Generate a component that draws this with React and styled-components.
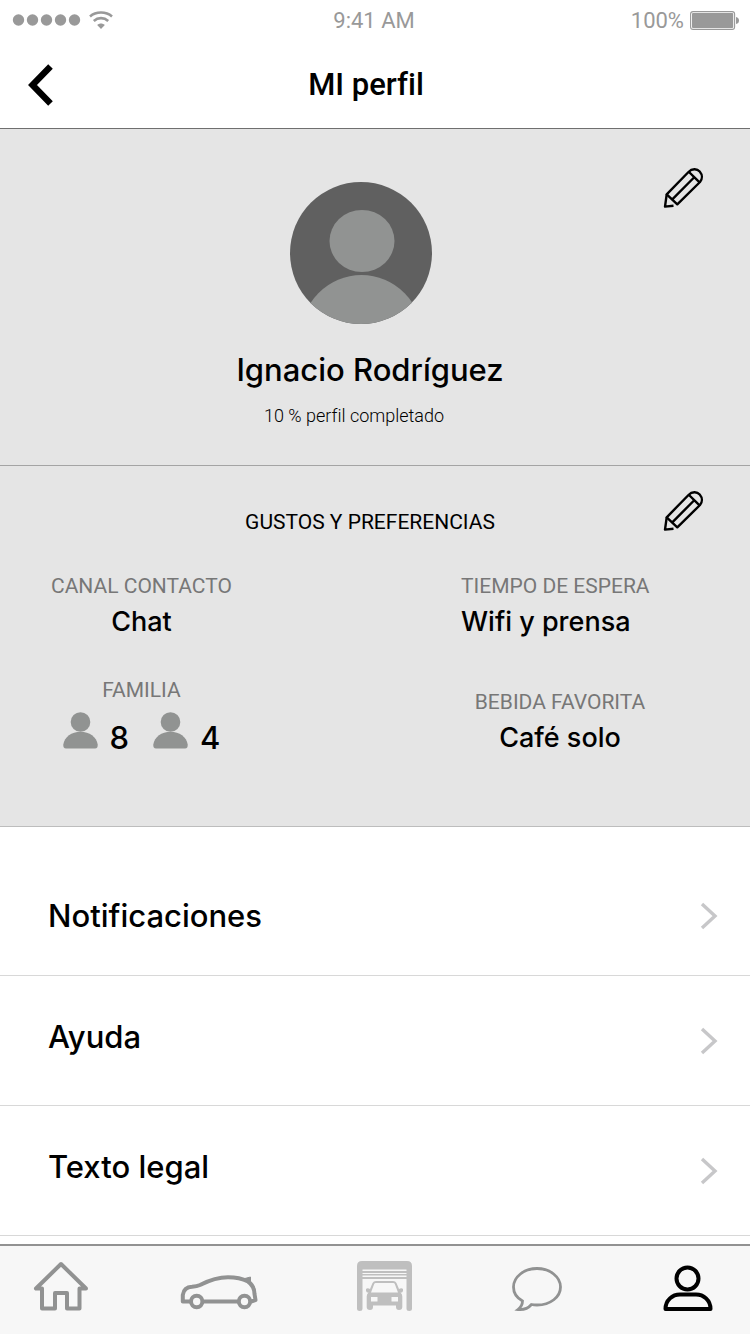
import React from "react";
import styled, { createGlobalStyle } from "styled-components";

const wide = `Inter, "Liberation Sans", sans-serif`;
const narrow = `Roboto, "Liberation Sans", sans-serif`;

const GlobalStyle = createGlobalStyle`
  *, *::before, *::after { box-sizing: border-box; }
  body {
    margin: 0;
    background: #fff;
    color: #000;
    font-family: ${wide};
    font-variant-ligatures: none;
  }
  h1, h2, p, dl, dd, ul { margin: 0; padding: 0; }
  button { border: 0; padding: 0; background: none; color: inherit; cursor: pointer; }
  svg { display: block; }
`;

const Screen = styled.div`
  display: flex;
  flex-direction: column;
  min-height: 100vh;
`;

const StatusBar = styled.div`
  display: grid;
  grid-template-columns: 1fr auto 1fr;
  align-items: center;
  height: 40px;
  padding: 0 10px 0 8px;
  color: #999;

  span {
    padding-top: 2px;
    font-family: ${narrow};
    font-size: 22px;
    line-height: 24px;
  }
`;

const Signal = styled.div`
  display: flex;
  align-items: center;
  gap: 8px;
  padding-left: 4px;
`;

const Power = styled.div`
  display: flex;
  align-items: center;
  justify-content: flex-end;
  gap: 6px;
`;

const Header = styled.header`
  display: grid;
  align-items: center;
  height: 89px;
  padding: 2px 18px 0 0;
  border-bottom: 1px solid #6f6f6f;
`;

const BackButton = styled.button`
  grid-area: 1 / 1;
  justify-self: start;
  z-index: 1;
  margin-left: 24px;
`;

const Title = styled.h1`
  grid-area: 1 / 1;
  text-align: center;
  font-family: ${narrow};
  font-size: 31px;
  font-weight: 500;
  line-height: 40px;
`;

const Panel = styled.section`
  display: grid;
  background: #e5e5e5;
  border-bottom: 1px solid ${(p) => p.$line};
`;

const EditButton = styled.button`
  grid-area: 1 / 1;
  place-self: start end;
  margin: ${(p) => p.$top}px 46px 0 0;
`;

const Summary = styled.div`
  grid-area: 1 / 1;
  display: flex;
  flex-direction: column;
  align-items: center;
  padding: 53px 10px 37px 0;
`;

const Avatar = styled.div`
  margin-right: 18px;
`;

const Name = styled.h2`
  margin-top: 26px;
  font-size: 31px;
  font-weight: 500;
  line-height: 40px;
`;

const Progress = styled.p`
  margin: 14px 32px 0 0;
  font-family: ${narrow};
  font-size: 18px;
  font-weight: 300;
  line-height: 24px;
`;

const PanelTitle = styled.h2`
  grid-area: 1 / 1;
  padding: 44px 10px 0 0;
  text-align: center;
  font-family: ${narrow};
  font-size: 21px;
  font-weight: 400;
  line-height: 24px;
`;

const Preferences = styled.div`
  display: flex;
  justify-content: space-between;
  padding: 40px 91px 70px 51px;
`;

const Column = styled.dl`
  display: flex;
  flex-direction: column;
  min-width: ${(p) => p.$width}px;
  gap: ${(p) => p.$gap}px;
`;

const Preference = styled.div`
  text-align: ${(p) => p.$align || "center"};
`;

const Label = styled.dt`
  color: #777;
  font-family: ${narrow};
  font-size: 21px;
  line-height: 24px;
`;

const Value = styled.dd`
  padding-top: 6px;
  font-size: 27px;
  font-weight: 500;
  line-height: 36px;
`;

const Family = styled.dd`
  display: flex;
  justify-content: center;
  gap: 24px;
  padding-top: 10px;
`;

const Member = styled.span`
  display: flex;
  align-items: flex-end;
  gap: 12px;
  height: 40px;
  font-size: 31px;
  font-weight: 500;
  line-height: 28px;

  svg { margin-bottom: 3px; }
`;

const Menu = styled.ul`
  list-style: none;
`;

const MenuItem = styled.li`
  border-bottom: 1px solid #d8d8d8;
`;

const MenuLink = styled.a`
  display: flex;
  align-items: center;
  justify-content: space-between;
  height: ${(p) => (p.$first ? 148 : 129)}px;
  padding: ${(p) => (p.$first ? 30 : 0)}px 32px 0 48px;
  color: #000;
  text-decoration: none;
  font-size: 31px;
  font-weight: 500;
  line-height: 40px;

  span { padding-bottom: ${(p) => (p.$first ? 0 : 8)}px; }
`;

const TabBar = styled.nav`
  display: grid;
  grid-template-columns: 108fr 207fr 125fr 179fr 124fr;
  align-items: end;
  justify-items: center;
  height: 90px;
  margin-top: auto;
  padding: 0 0 23px 7px;
  border-top: 2px solid #929292;
  background: #f7f7f7;
`;

const Tab = styled.a`
  display: block;
  color: ${(p) => (p.$active ? "#000" : "#919292")};
`;

const WifiIcon = () => (
  <svg width="24" height="19" viewBox="0 0 24 19" fill="none" stroke="#999" strokeWidth="2.6" aria-hidden="true">
    <path d="M1 5.4C7 .2 17 .2 23 5.4" />
    <path d="M4.8 9.9C9 6.2 15 6.2 19.2 9.9" />
    <path d="M8.2 14C10.5 12 13.5 12 15.8 14L12 18Z" fill="#999" stroke="none" />
  </svg>
);

const BatteryIcon = () => (
  <svg width="50" height="19" viewBox="0 0 50 19" aria-hidden="true">
    <rect x=".6" y=".6" width="44" height="17.8" rx="2.5" fill="none" stroke="#999" strokeWidth="1.1" />
    <rect x="2" y="2" width="41.2" height="15" rx="1" fill="#999" />
    <path d="M46 6Q49 6.500 49 9.500Q49 12.500 46 13Z" fill="#999" />
  </svg>
);

const PencilIcon = () => (
  <svg width="42" height="42" viewBox="0 0 42 42" fill="none" stroke="#000" strokeWidth="2.400" strokeLinejoin="round" aria-hidden="true">
    <path d="M15.300 37.300L4.700 27.300L26.500 5C30 1.500 35 1.500 37.700 4.500C40.500 7.700 40.500 12 38 15Z" />
    <path d="M4.700 27.300L3 39.600L11.500 38.700M27 5L37.800 15.600M10.300 32.300L31.500 11" />
  </svg>
);

const AvatarIcon = () => (
  <svg width="142" height="142" viewBox="0 0 142 142" role="img" aria-label="Foto de perfil">
    <clipPath id="face"><circle cx="71" cy="71" r="71" /></clipPath>
    <g clipPath="url(#face)">
      <rect width="142" height="142" fill="#606060" />
      <ellipse cx="72" cy="59" rx="32.500" ry="31" fill="#919392" />
      <ellipse cx="71.500" cy="155" rx="61" ry="62" fill="#919392" />
    </g>
  </svg>
);

const PersonIcon = () => (
  <svg width="35" height="37" viewBox="0 0 35 37" fill="#919392" aria-hidden="true">
    <circle cx="17.500" cy="10" r="9.800" />
    <path d="M3 36.500Q0 36.500 .3 32.500C1.500 25 8.500 19.800 17.500 19.800S33.500 25 34.700 32.500Q35 36.500 32 36.500Z" />
  </svg>
);

const Chevron = () => (
  <svg width="18" height="28" viewBox="0 0 18 28" fill="none" stroke="#c7c7c9" strokeWidth="3.400" aria-hidden="true">
    <path d="M2 2L15 14L2 26" />
  </svg>
);

const HomeIcon = () => (
  <svg width="56" height="50" viewBox="0 0 56 50" fill="none" stroke="currentColor" strokeWidth="4" strokeLinejoin="round" aria-hidden="true">
    <path d="M28 3L3 27.500H9V47.500H22V32H34V47.500H46.500V27.500H53Z" />
  </svg>
);

const CarIcon = () => (
  <svg width="78" height="36" viewBox="0 0 78 36" fill="none" stroke="currentColor" strokeWidth="4" strokeLinejoin="round" aria-hidden="true">
    <path d="M11 26.500H2.800V20C3.500 15 7 12 12 11.800C15 11.500 17 11.300 20 10C29 5.500 37 2.300 48 2.300C56 2.300 63 4 68 6.500C73 10 74.500 15 74.500 19L75.500 25L71 26.500M22 26.500H59" />
    <path d="M63 4L70.500 2V8Z" fill="currentColor" strokeWidth="1" />
    <circle cx="16.700" cy="26.500" r="5.700" />
    <circle cx="64.500" cy="26.500" r="5.700" />
  </svg>
);

const GarageIcon = () => (
  <svg width="55" height="50" viewBox="0 0 55 50" fill="#bfbfbf" aria-hidden="true">
    <path d="M0 5Q0 0 5 0H50Q55 0 55 5V47.500Q55 50 52.200 50Q49.500 50 49.500 47.500V8.500H5.500V47.500Q5.500 50 2.700 50Q0 50 0 47.500Z" />
    <path d="M5 10H50V12H5ZM5 13H50V14.600H5ZM5 16H50V18H5Z" />
    <path fillRule="evenodd" d="M11.500 31.500L10 31.500Q8.500 30.500 9 28Q10.500 26.500 13 28L15.500 22Q16.500 20 19 20H36Q38.500 20 39.500 22L42 28Q44.500 26.500 46 28Q46.500 30.500 45 31.500L43.500 31.500Q45.300 33 45.300 35.500V46Q45.300 49 42 49Q39 49 39 46V44.500H16V46Q16 49 13 49Q9.700 49 9.700 46V35.500Q9.700 33 11.500 31.500ZM17.200 23L14 31.500H41L37.800 23Q37.300 22 36.500 22H18.500Q17.700 22 17.200 23ZM14 36V40.500H20.500V36ZM34.500 36V40.500H41V36Z" />
  </svg>
);

const ChatIcon = () => (
  <svg width="50" height="44" viewBox="0 0 50 44" fill="none" stroke="currentColor" strokeWidth="2.800" aria-hidden="true">
    <path d="M10.500 34C5 31 1.500 26 1.500 20C1.500 10 12 1.500 25 1.500S48.500 10 48.500 20S38.500 38 25 38Q22 38 19.500 37.500C16.500 41 11.500 43 6 42.500Q10.500 39 10.500 34Z" />
  </svg>
);

const ProfileIcon = () => (
  <svg width="50" height="46" viewBox="0 0 50 46" fill="none" stroke="currentColor" strokeWidth="4" strokeLinejoin="round" aria-hidden="true">
    <circle cx="24.500" cy="13.500" r="11" />
    <path d="M2.500 44H47.500C47.500 35 40.500 29.500 33 29.500H17C9.500 29.500 2.500 35 2.500 44Z" />
  </svg>
);

const menuItems = ["Notificaciones", "Ayuda", "Texto legal"];

const tabs = [
  { label: "Inicio", Icon: HomeIcon },
  { label: "Coche", Icon: CarIcon },
  { label: "Taller", Icon: GarageIcon },
  { label: "Chat", Icon: ChatIcon },
  { label: "Perfil", Icon: ProfileIcon, active: true },
];

export default function App() {
  return (
    <Screen>
      <GlobalStyle />
      <StatusBar>
        <Signal>
          <svg width="69" height="12" viewBox="0 0 69 12" fill="#999" aria-hidden="true">
            {[6.5, 20.5, 34.5, 48.5, 62.5].map((x) => (
              <circle key={x} cx={x} cy="6" r="5.700" />
            ))}
          </svg>
          <WifiIcon />
        </Signal>
        <span>9:41 AM</span>
        <Power>
          <span>100%</span>
          <BatteryIcon />
        </Power>
      </StatusBar>

      <Header>
        <BackButton aria-label="Volver">
          <svg width="32" height="42" viewBox="0 0 32 42" fill="none" stroke="#000" strokeWidth="6.400" aria-hidden="true">
            <path d="M26.500 2.500L8.500 21L26.500 39.500" />
          </svg>
        </BackButton>
        <Title>MI perfil</Title>
      </Header>

      <Panel $line="#a4a4a4">
        <Summary>
          <Avatar><AvatarIcon /></Avatar>
          <Name>Ignacio Rodríguez</Name>
          <Progress>10 % perfil completado</Progress>
        </Summary>
        <EditButton $top={38} aria-label="Editar perfil"><PencilIcon /></EditButton>
      </Panel>

      <Panel $line="#bdbdbd">
        <PanelTitle>GUSTOS Y PREFERENCIAS</PanelTitle>
        <EditButton $top={24} aria-label="Editar preferencias"><PencilIcon /></EditButton>
        <Preferences>
          <Column $gap={38}>
            <Preference>
              <Label>CANAL CONTACTO</Label>
              <Value>Chat</Value>
            </Preference>
            <Preference>
              <Label>FAMILIA</Label>
              <Family>
                <Member><PersonIcon />8</Member>
                <Member><PersonIcon />4</Member>
              </Family>
            </Preference>
          </Column>
          <Column $gap={50} $width={198}>
            <Preference $align="left">
              <Label>TIEMPO DE ESPERA</Label>
              <Value>Wifi y prensa</Value>
            </Preference>
            <Preference>
              <Label>BEBIDA FAVORITA</Label>
              <Value>Café solo</Value>
            </Preference>
          </Column>
        </Preferences>
      </Panel>

      <Menu>
        {menuItems.map((item, i) => (
          <MenuItem key={item}>
            <MenuLink href="#" $first={i === 0}>
              <span>{item}</span>
              <Chevron />
            </MenuLink>
          </MenuItem>
        ))}
      </Menu>

      <TabBar>
        {tabs.map(({ label, Icon, active }) => (
          <Tab key={label} href="#" aria-label={label} $active={active}>
            <Icon />
          </Tab>
        ))}
      </TabBar>
    </Screen>
  );
}
